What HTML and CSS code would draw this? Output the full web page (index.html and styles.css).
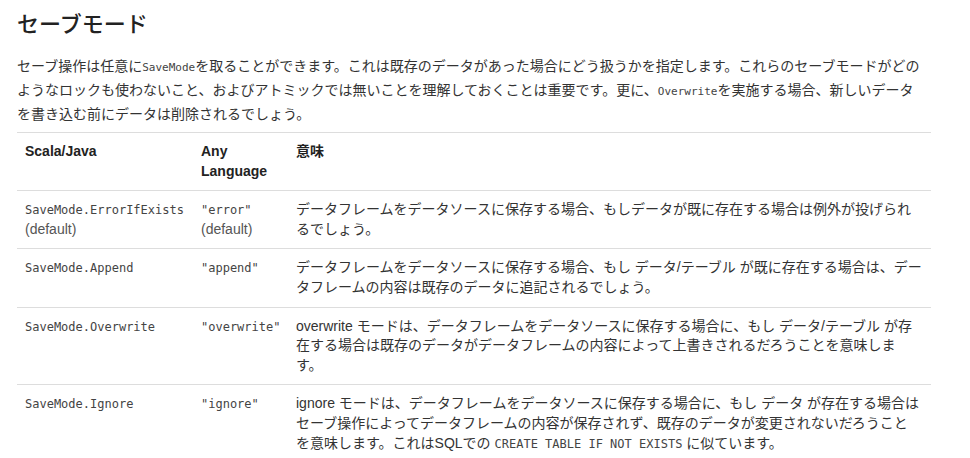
FILE: index.html
```html
<!DOCTYPE html>
<html lang="ja">
<head>
<meta charset="utf-8">
<link rel="stylesheet" href="styles.css">
</head>
<body>
<main class="doc">
  <h2 class="title">セーブモード</h2>
  <p class="lead">セーブ操作は任意に<code class="inline">SaveMode</code>を取ることができます。これは既存のデータがあった場合にどう扱うかを指定します。これらのセーブモードがどのようなロックも使わないこと、およびアトミックでは無いことを理解しておくことは重要です。更に、<code class="inline">Overwrite</code>を実施する場合、新しいデータ<br>を書き込む前にデータは削除されるでしょう。</p>
  <table class="modes">
    <colgroup>
      <col class="c1"><col class="c2"><col class="c3">
    </colgroup>
    <thead>
      <tr><th>Scala/Java</th><th>Any Language</th><th>意味</th></tr>
    </thead>
    <tbody>
      <tr>
        <td><code>SaveMode.ErrorIfExists</code> (default)</td>
        <td><code>"error"</code> (default)</td>
        <td>データフレームをデータソースに保存する場合、もしデータが既に存在する場合は例外が投げられるでしょう。</td>
      </tr>
      <tr>
        <td><code>SaveMode.Append</code></td>
        <td><code>"append"</code></td>
        <td>データフレームをデータソースに保存する場合、もし データ/テーブル が既に存在する場合は、データフレームの内容は既存のデータに追記されるでしょう。</td>
      </tr>
      <tr>
        <td><code>SaveMode.Overwrite</code></td>
        <td><code>"overwrite"</code></td>
        <td>overwrite モードは、データフレームをデータソースに保存する場合に、もし データ/テーブル が存在する場合は既存のデータがデータフレームの内容によって上書きされるだろうことを意味しま<br>す。</td>
      </tr>
      <tr>
        <td><code>SaveMode.Ignore</code></td>
        <td><code>"ignore"</code></td>
        <td>ignore モードは、データフレームをデータソースに保存する場合に、もし データ が存在する場合はセーブ操作によってデータフレームの内容が保存されず、既存のデータが変更されないだろうこと<br>を意味します。これはSQLでの <code>CREATE TABLE IF NOT EXISTS</code> に似ています。</td>
      </tr>
    </tbody>
  </table>
</main>
</body>
</html>
```
FILE: styles.css
```css
html, body {
  margin: 0;
  padding: 0;
  background: #fff;
}
body {
  font-family: "Liberation Sans", "Noto Sans CJK JP", sans-serif;
  color: #333;
}
.doc {
  width: 914px;
  padding: 0 0 0 17px;
}
.title {
  font-family: "Noto Sans CJK JP", sans-serif;
  font-size: 22px;
  font-weight: 500;
  line-height: 30px;
  color: #222;
  margin: 7px 0 0 0;
}
.lead {
  font-family: "Noto Sans CJK JP", sans-serif;
  font-size: 14px;
  line-height: 24px;
  margin: 16px 0 7px 0;
}
code {
  font-family: "DejaVu Sans Mono", monospace;
  font-size: 12px;
  line-height: 1;
  color: #444;
  white-space: nowrap;
}
code.inline {
  font-size: 11px;
}
.modes {
  width: 914px;
  border-collapse: collapse;
  table-layout: fixed;
  font-size: 14px;
  line-height: 1.4;
}
.c1 { width: 176px; }
.c2 { width: 95px; }
.modes th, .modes td {
  border-top: 1px solid #ddd;
  padding: 9px 8px;
  text-align: left;
  vertical-align: top;
}
.modes th {
  font-weight: bold;
  color: #222;
}
.modes td:first-child, .modes td:nth-child(2) {
  color: #555;
}
```
